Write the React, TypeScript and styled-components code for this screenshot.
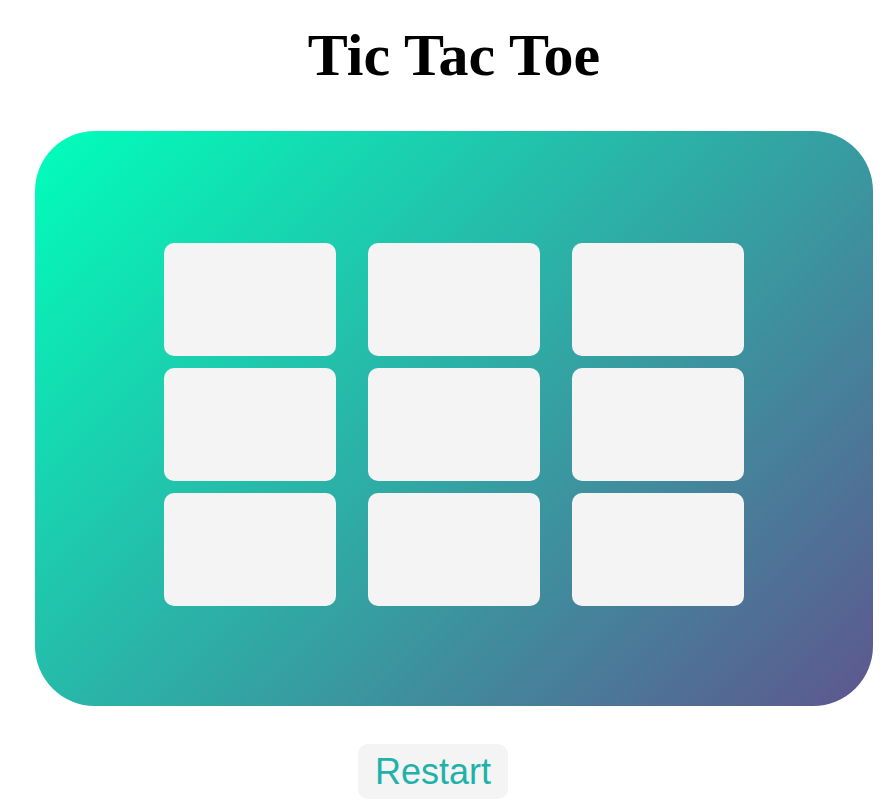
import React from "react";
import styled, { createGlobalStyle } from "styled-components";

const GlobalStyle = createGlobalStyle`
  body {
    margin: 8px;
    background: #ffffff;
    font-family: "Liberation Serif", "Times New Roman", serif;
  }
`;

const Page = styled.div`
  width: 838px;
  margin-left: 27px;
  display: flex;
  flex-direction: column;
`;

const Title = styled.h1`
  margin: 14px 0 0;
  height: 66px;
  line-height: 66px;
  font-family: "Liberation Serif", "Times New Roman", serif;
  font-weight: 700;
  font-size: 60px;
  text-align: center;
  color: #000;
`;

const Board = styled.div`
  margin-top: 43px;
  height: 575px;
  box-sizing: border-box;
  padding: 112px 0 100px;
  border-radius: 60px;
  background: linear-gradient(135deg, #00ffbb 0%, #5e568f 100%);
  display: grid;
  grid-template-columns: repeat(3, 172px);
  grid-template-rows: repeat(3, 113px);
  column-gap: 32px;
  row-gap: 12px;
  justify-content: center;
  align-content: start;
`;

const Cell = styled.button`
  border: none;
  padding: 0;
  margin: 0;
  border-radius: 10px;
  background: #f4f4f4;
  cursor: pointer;
`;

const Footer = styled.div`
  display: flex;
  margin-top: 38px;
  padding-left: 323px;
`;

const RestartButton = styled.button`
  border: none;
  margin: 0;
  padding: 7px 17px;
  border-radius: 10px;
  background: #f4f4f4;
  color: #20b2aa;
  font-family: "Liberation Sans", Arial, sans-serif;
  font-size: 36px;
  line-height: 41px;
  cursor: pointer;
`;

export default function App() {
  const cells = Array.from({ length: 9 }, (_, i) => i);
  return (
    <>
      <GlobalStyle />
      <Page>
        <Title>Tic Tac Toe</Title>
        <Board>
          {cells.map((i) => (
            <Cell key={i} aria-label={`cell ${i + 1}`} />
          ))}
        </Board>
        <Footer>
          <RestartButton>Restart</RestartButton>
        </Footer>
      </Page>
    </>
  );
}
